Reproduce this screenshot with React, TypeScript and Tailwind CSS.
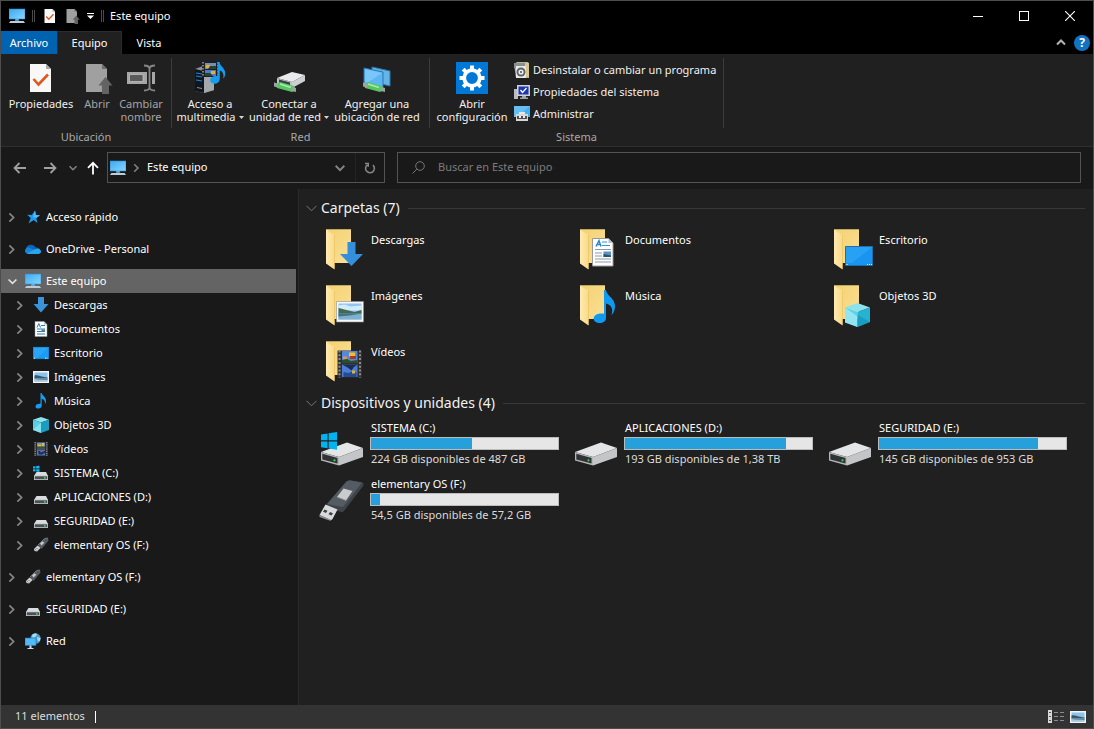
import { useState } from 'react'
import type { ReactNode } from 'react'

type IconProps = { className?: string }

type TreeItem = {
  label: string
  icon: ReactNode
  open?: boolean
  children?: TreeItem[]
}

type Drive = {
  name: string
  free: string
  used: number
  icon: ReactNode
}

/* ---------- small icons (16px) ---------- */

function PcIcon({ className = 'size-4' }: IconProps) {
  return (
    <svg viewBox="0 0 16 16" className={className}>
      <defs>
        <linearGradient id="pcScreen" x1="0" y1="0" x2="1" y2="1">
          <stop offset="0" stopColor="#3aa9f0" />
          <stop offset="1" stopColor="#8ad7ff" />
        </linearGradient>
      </defs>
      <path d="M0 1h16v10H0z" fill="url(#pcScreen)" />
      <path d="M0 1h16v10H0z" fill="none" stroke="#2f8fd0" strokeWidth=".6" />
      <path d="M6.5 11h3l.8 1.8H5.7z" fill="#5fb4e8" />
      <path d="M1.5 13h13l1.5 2H0z" fill="#d5dde3" />
      <path d="M1.2 14h13.6" stroke="#7d99ab" strokeWidth=".5" />
    </svg>
  )
}

function StarIcon() {
  return (
    <svg viewBox="0 0 16 16" className="size-4">
      <path d="M10 1.500l.9 4.500 4.100.3-3.700 2.600 1.100 5.100-3.700-3-5.200 3.500 2.200-5.500L2.200 5.800l4.600.1z" fill="#1c9df0" />
      <path d="M10 1.500l.9 4.500 4.100.3-3.700 2.600L8 8z" fill="#54bbf8" />
    </svg>
  )
}

function CloudIcon() {
  return (
    <svg viewBox="0 0 16 16" className="size-4">
      <path d="M1 9.500A4.800 4.800 0 0 1 6 3.700a5.200 5.200 0 0 1 4.800 2.800c2-.4 4 .7 4.400 2.700l-5 2z" fill="#0f63b8" />
      <path d="M0 10c0-2 1.500-3.500 3.600-3.500 1 0 1.900.4 4.400 2l5 4.200H3C1.200 12.700 0 11.600 0 10z" fill="#1683dc" />
      <path d="M2 12.600L9.800 8.300c.8-.4 1.600-.6 2.400-.6 2.200 0 3.800 1.200 3.800 2.700 0 1.500-1.200 2.500-2.900 2.500H3.200c-.5 0-.8-.1-1.200-.3z" fill="#28a8ea" />
    </svg>
  )
}

function DownloadIcon() {
  return (
    <svg viewBox="0 0 16 16" className="size-4">
      <path d="M5 0h6v7h4.500L8 15.500.5 7H5z" fill="#3b93dc" />
    </svg>
  )
}

function DocIcon() {
  return (
    <svg viewBox="0 0 16 16" className="size-4">
      <path d="M2 .5h9l3 3v12H2z" fill="#fff" stroke="#9a9a9a" strokeWidth=".5" />
      <path d="M11 .5v3h3z" fill="#b8c4cc" />
      <path d="M4 6.500L5.800 2.500 7.500 6.500M8 4.500h4M4 8h8M4 10.500h8M4 13h8" stroke="#2a7fa8" fill="none" />
      <path d="M8.500 8.500H12v2.500H8.500z" fill="#4f7f9a" />
    </svg>
  )
}

function DesktopIcon() {
  return (
    <svg viewBox="0 0 16 16" className="size-4">
      <path d="M0 2h16v12H0z" fill="#1a9cf5" />
      <path d="M0 2h16L4 13H0z" fill="#37acfa" opacity=".5" />
      <path d="M.3 2.300h15.400v11.400H.3z" fill="none" stroke="#1273b8" strokeWidth=".6" />
      <path d="M1 13.200h1M12 13.200h3" stroke="#fff" strokeDasharray="1 .5" strokeWidth=".9" />
    </svg>
  )
}

function PictureIcon({ className = 'size-4' }: IconProps) {
  return (
    <svg viewBox="0 0 16 16" className={className}>
      <path d="M0 2h16v12H0z" fill="#f4f4f4" />
      <path d="M1.500 3.500h13v9h-13z" fill="#8cc3ea" />
      <path d="M1.500 6.500c3-1 5 1 13 2v1.500h-13z" fill="#35586b" />
      <path d="M1.500 9.500h13v3h-13z" fill="#a9c6d8" />
      <path d="M1.500 10.500l8-1 5 .5v1z" fill="#5e88a0" />
    </svg>
  )
}

function MusicIcon() {
  return (
    <svg viewBox="0 0 16 16" className="size-4">
      <path d="M7.500 0h1.200c.3 2.600 4.800 4 4.300 8.600-.2 1.400-.9 2.400-1.200 2.700.8-3-.6-4.800-3.100-5.600v6.900c0 1.700-1.300 3-3.200 3S2.500 14.700 2.500 13.400c0-1.700 1.900-3 5-2.700z" fill="#169cf0" />
    </svg>
  )
}

function CubeIcon() {
  return (
    <svg viewBox="0 0 16 16" className="size-4">
      <path d="M8 0l8 2.800L8 5.500 0 2.800z" fill="#8fe3ef" />
      <path d="M0 2.800l8 2.700V16l-8-3z" fill="#55cfe3" />
      <path d="M16 2.800L8 5.500V16l8-3z" fill="#1a9dbf" />
      <path d="M0 13l8-7.500V16z" fill="#a5ecf5" opacity=".6" />
    </svg>
  )
}

function VideoIcon() {
  return (
    <svg viewBox="0 0 16 16" className="size-4">
      <path d="M1 1h14v14H1z" fill="#2b2b2b" />
      <path d="M2.200 1v14M13.800 1v14" stroke="#9b9b9b" strokeDasharray="1.200 1" strokeWidth="1.200" />
      <path d="M4 1.500h8v6H4z" fill="#6a8fc4" />
      <path d="M4 8.500h8v6H4z" fill="#4573bd" />
      <path d="M5 3.500h3v2H5zM9 2h2v3H9z" fill="#e8b53a" />
      <path d="M4 5.500h8v2H4z" fill="#35552d" />
      <path d="M5 10h2l1 2 2-2h2v1.500l-3 2H6z" fill="#1f2a52" />
      <path d="M9 9h2v1.500H9z" fill="#c6503a" />
    </svg>
  )
}

function SmallDriveIcon({ windows = false }: { windows?: boolean }) {
  return (
    <svg viewBox="0 0 16 16" className="size-4">
      <path d="M3.500 7h9.500l2 4H1z" fill="#d9dcdf" />
      <path d="M1 10.500h14V15H1z" fill="#c4c8cb" />
      <path d="M1.800 11.300h12.400v2.900H1.800z" fill="#4b5054" />
      <path d="M11 12.200h1.800v1.200H11z" fill="#4ee06a" />
      {windows && (
        <path d="M0 1.500l2.500-.3v2.300H0zM3.200 1.100L6.500.7v2.800H3.200zM0 4.200h2.500v2.300L0 6.200zM3.200 4.200h3.300V7l-3.300-.4z" fill="#16b4f0" />
      )}
    </svg>
  )
}

function SmallUsbIcon() {
  return (
    <svg viewBox="0 0 16 16" className="size-4">
      <path d="M5 8l6.500-6.500 3.500-.5.5 2.500L9 11.500l-3-.500z" fill="#565b60" />
      <path d="M5 8l6.500-6.500 3.500-.500" fill="none" stroke="#858a8f" strokeWidth=".7" />
      <path d="M7 6.500l2.500-2.200 1.800 1.500L8.500 8.500z" fill="#c7c9cb" />
      <path d="M1 12l3.500-3.500 3 2.500L4 14.500l-2.500-.5z" fill="#cfd2d4" />
      <path d="M2.500 12.500l.8.800M3.800 11.300l.8.800" stroke="#4f5458" />
    </svg>
  )
}

function NetworkIcon() {
  return (
    <svg viewBox="0 0 16 16" className="size-4">
      <circle cx="10.500" cy="5.500" r="5.200" fill="#4f9fc9" />
      <path d="M7 2c2-1.700 4-1.700 5-1l-1.500 3-3 1zM12 4l3.500 1-1 3.500-2-1z" fill="#a6dcf0" />
      <path d="M0 5h11v7.500H0z" fill="#53b8f8" stroke="#1b75ad" strokeWidth=".6" />
      <path d="M4.500 12.500h2V15h-2zM2.500 15h6v1h-6z" fill="#cfe0ea" />
    </svg>
  )
}

function CheckDocIcon({ className }: IconProps) {
  return (
    <svg viewBox="0 0 32 32" className={className}>
      <path d="M5 2h16l5 5v23H5z" fill="#f8f8f8" />
      <path d="M21 2v5h5z" fill="#a9a9a9" />
      <path d="M8.500 17l5 5.500L23 12.500" fill="none" stroke="#dc5a1f" strokeWidth="2.600" />
    </svg>
  )
}

function OpenDocIcon({ className }: IconProps) {
  return (
    <svg viewBox="0 0 32 32" className={className}>
      <path d="M5 2h16l5 5v23H5z" fill="#a0a0a0" />
      <path d="M21 2v5h5z" fill="#6d6d6d" />
      <path d="M24.500 15l7 8.500H28V32h-7v-8.500h-3.500z" fill="#636363" />
    </svg>
  )
}

/* ---------- ribbon icons (32px) ---------- */

function RenameIcon() {
  return (
    <svg viewBox="0 0 32 32" className="size-8">
      <path d="M2 10h28v12H2z" fill="#a6a6a6" />
      <path d="M4.500 12.500h13.500v7H4.500z" fill="#5a5a5a" stroke="#c9c9c9" strokeWidth=".7" />
      <path d="M22 9h5v14h-5z" fill="#202020" />
      <path d="M19 3.500c3 0 5.500.5 5.500 3.500v18c0 3-2.500 3.500-5.500 3.500M30 3.500c-3 0-5.500.5-5.500 3.500v18c0 3 2.500 3.500 5.500 3.500" fill="none" stroke="#858585" strokeWidth="1.800" />
    </svg>
  )
}

function MediaIcon() {
  return (
    <svg viewBox="0 0 32 32" className="size-8">
      <path d="M1 7l8-3 11 4v20l-10 3-9-2z" fill="#8d9297" />
      <path d="M1 7l9 2v22l-9-2z" fill="#10161d" />
      <path d="M2 11l6 1M2 14l6 1M2 18l6 1" stroke="#2384dc" strokeWidth="1.200" />
      <path d="M3 25.500l5 1" stroke="#8d9297" />
      <path d="M10 9l10-1v20l-10 3z" fill="#a3a8ac" />
      <path d="M8 0h17v15H8z" fill="#1c2026" />
      <path d="M9 0v15M24 0v15" stroke="#dadada" strokeDasharray="1.500 1.500" />
      <path d="M11 1h11v6H11z" fill="#7290b8" />
      <path d="M11 8h11v6H11z" fill="#4d7cc8" />
      <path d="M12 3h4v3h-4zM17 9h4v3h-4z" fill="#dbb13d" />
      <path d="M16 4h6v3h-8zM11 11h5l3 3h-8z" fill="#28422f" />
      <path d="M23.500 0h2c.3 4.500 6.500 6 5.700 12.500-.3 2-1.200 3.500-2 4.300.8-4.300-.2-7.300-3.400-8.300v8.200c0 3-2.600 5-5.300 5-2.500 0-4.300-1.500-4.300-3.500 0-2.800 3.300-4.700 7.300-4.200z" fill="#169bed" />
    </svg>
  )
}

function NetDriveIcon() {
  return (
    <svg viewBox="0 0 32 32" className="size-8">
      <path d="M4 16l15-6 13 3-13 7z" fill="#e9ebec" />
      <path d="M4 16l15 4v6L4 22z" fill="#bfc3c6" />
      <path d="M6 17.500l11 3v3.500L6 21z" fill="#3a3f43" />
      <path d="M32 13l-13 7v6l13-7z" fill="#cdd0d2" />
      <path d="M3 22l4-2 14 4 2 4-4 2-15-4z" fill="#58c464" />
      <path d="M7 22l11 3.500" stroke="#a6eda8" strokeWidth="1.600" />
      <path d="M1 20.500l4 1v4l-4-1zM19 25l4 1v4l-4-1z" fill="#9ba5a3" />
    </svg>
  )
}

function NetPlaceIcon() {
  return (
    <svg viewBox="0 0 32 32" className="size-8">
      <path d="M11 5l18 4v15l-18-4z" fill="#64b4e8" stroke="#2a76ac" />
      <path d="M3 6l19 4v17L3 22z" fill="#5cb6f5" stroke="#2a76ac" />
      <path d="M4 7l17 4-15 10-2-1z" fill="#8ed0fb" opacity=".6" />
      <path d="M3 22l4-2 14 4 2 4-4 2-15-4z" fill="#58c464" />
      <path d="M7 22l11 3.500" stroke="#a6eda8" strokeWidth="1.600" />
      <path d="M2 20.500l4 1v4l-4-1zM20 25l4 1v4l-4-1z" fill="#9ba5a3" />
    </svg>
  )
}

function SettingsIcon() {
  return (
    <svg viewBox="0 0 32 32" className="size-8">
      <path d="M0 0h32v32H0z" fill="#0078d7" />
      <g fill="#fff">
        <path d="M14 3.500h4V8h-4zM14 24h4v4.500h-4zM3.500 14H8v4H3.500zM24 14h4.500v4H24z" />
        <path d="M14 3.500h4V8h-4zM14 24h4v4.500h-4zM3.500 14H8v4H3.500zM24 14h4.500v4H24z" transform="rotate(45 16 16)" />
      </g>
      <circle cx="16" cy="16" r="7.800" fill="none" stroke="#fff" strokeWidth="3.800" />
    </svg>
  )
}

function UninstallIcon() {
  return (
    <svg viewBox="0 0 16 16" className="size-4">
      <path d="M0 2l3-2h11l1 2v14H2z" fill="#b9b29e" />
      <path d="M0 1h12v5H0z" fill="#88918d" />
      <path d="M11 1h4v14h-4z" fill="#d9c68f" />
      <path d="M2 4h10v12H2z" fill="#e8e8e8" />
      <circle cx="7" cy="10" r="4.500" fill="#5c6266" />
      <circle cx="7" cy="10" r="2.600" fill="#eceeef" />
      <circle cx="7" cy="10" r="1" fill="#4b5054" />
    </svg>
  )
}

function SystemIcon() {
  return (
    <svg viewBox="0 0 16 16" className="size-4">
      <path d="M0 5h4v10H0z" fill="#b9bdc1" />
      <path d="M3 1h13v11H3z" fill="#cfd3d8" />
      <path d="M4.500 2.500h10v8h-10z" fill="#1c36b0" />
      <path d="M6.500 6l2 2.500L12.500 4" fill="none" stroke="#fff" strokeWidth="1.300" />
      <path d="M8 12h4v1.500h2V15H6v-1.500h2z" fill="#9ea3a8" />
    </svg>
  )
}

function ManageIcon() {
  return (
    <svg viewBox="0 0 16 16" className="size-4">
      <path d="M0 0h16v11H0z" fill="#43b0f0" />
      <path d="M0 0h16L3 11H0z" fill="#7bcbf7" opacity=".6" />
      <path d="M5 6h6v2H5z" fill="#e6e6e6" />
      <path d="M2 8h12v7H2z" fill="#d6d6d2" />
      <path d="M3 10h10v3H3z" fill="#4c4f50" />
      <path d="M5 10h2v2H5zM9 10h2v2H9z" fill="#eee" />
    </svg>
  )
}

/* ---------- large content icons (48px) ---------- */

function FolderIcon({ children }: { children: ReactNode }) {
  return (
    <svg viewBox="0 0 48 48" className="size-12 shrink-0">
      <defs>
        <linearGradient id="folderBack" x1="0" y1="0" x2="1" y2="1">
          <stop offset="0" stopColor="#f3d272" />
          <stop offset="1" stopColor="#fbdf94" />
        </linearGradient>
        <linearGradient id="folderFront" x1="0" y1="0" x2="1" y2="0">
          <stop offset="0" stopColor="#ffeab0" />
          <stop offset="1" stopColor="#f9da86" />
        </linearGradient>
      </defs>
      <path d="M7 3.200h25V37H11z" fill="url(#folderBack)" />
      <path d="M7 3.500L15.500 9v34.500L7 37.500z" fill="url(#folderFront)" />
      <path d="M15.500 9v34" stroke="#e9bf5c" strokeWidth=".6" />
      {children}
    </svg>
  )
}

const downloadBadge = <path d="M28.500 16h8v12H44L32.500 40 21 28h7.500z" fill="#3490dc" />

const documentBadge = (
  <g>
    <path d="M19.500 12.500h16l4.500 4.500v23H19.500z" fill="#fff" stroke="#9a9a9a" />
    <path d="M35.500 12.500V17H40z" fill="#b5bfc6" />
    <path d="M23 20.500l3-6 2 6M24 18.500h3.500" fill="none" stroke="#2186c8" strokeWidth="1.400" />
    <path d="M29 16h5M29 19.500h8" stroke="#2b9ad6" strokeWidth="1.200" />
    <path d="M22 23.500h16M22 27h7M22 30h7M22 33h16M22 36h16" stroke="#8b9aa5" />
    <path d="M30.500 25.500h7.500v5.500h-7.500z" fill="#5a93c4" />
    <path d="M30.500 28l7.500 1.500V31h-7.500z" fill="#29556e" />
  </g>
)

const desktopBadge = (
  <g>
    <path d="M18.500 20.500h27v19h-27z" fill="#1795f0" stroke="#1f6ea5" />
    <path d="M19 21h26L25 37h-6z" fill="#3fb0fb" opacity=".45" />
    <path d="M19.500 38.500h2M40 38.500h5" stroke="#fff" strokeDasharray="1 1" />
  </g>
)

const pictureBadge = (
  <g>
    <path d="M17.500 19.500h27v20.500h-27z" fill="#f7f7f7" stroke="#8b8f92" strokeWidth=".6" />
    <path d="M19.500 21.500h23v16h-23z" fill="#8fc5f2" />
    <path d="M19.500 23.500l6-1 6 2 11-1v5h-23z" fill="#d6ebf8" />
    <path d="M19.500 26c4 .5 9 2.500 16 4l7-2v4h-23z" fill="#3e6c50" />
    <path d="M19.500 31.500h23v6h-23z" fill="#7fb0cc" />
    <path d="M19.500 31.500h23l-12 2-11 1z" fill="#467088" />
  </g>
)

const musicBadge = (
  <path d="M31 8h2c.5 6 9.500 8 9 17-.2 4-2 6.500-3.500 8 2-6 0-10-5.500-11.500v14.500c0 3.300-2.800 5-6.200 5-3.600 0-6.100-1.800-6.100-4.300 0-3.700 4.300-6 10.300-5z" fill="#0f9af0" />
)

const cubeBadge = (
  <g>
    <path d="M30.500 21L43 25.500 30.500 30l-12.500-4.500z" fill="#8be3f0" />
    <path d="M18 25.500L30.500 30v15L18 40.500z" fill="#5dd3e6" />
    <path d="M43 25.500L30.500 30v15L43 40z" fill="#26b3d2" />
    <path d="M18 25.500l12.500 9V45L18 40.500z" fill="#b8f3f8" opacity=".6" />
    <path d="M43 40l-12.500-7v12z" fill="#0d8fb4" opacity=".6" />
  </g>
)

const videoBadge = (
  <g>
    <path d="M18.500 12.500H43v27H18.500z" fill="#303030" />
    <path d="M20.500 12.500v27M41 12.500v27" stroke="#8d8d8d" strokeWidth="2" strokeDasharray="2 1.800" />
    <path d="M23 13h15.500v12H23z" fill="#5587dc" />
    <path d="M23 26.500h15.500v12.500H23z" fill="#4a7dd8" />
    <path d="M30 14.500h6v4h-6z" fill="#e9c133" />
    <path d="M31 18h6v3h-6z" fill="#b6341f" />
    <path d="M24 18.500h4v3h-4z" fill="#d8975a" />
    <path d="M23 22l5-1 4 2 6.500-1v3H23z" fill="#27502a" />
    <path d="M23 26.500h15.500l-4 3-2 3-4-3z" fill="#1e2c50" />
    <path d="M24.500 34l5 1 5-2 3 2v4h-13z" fill="#274b92" />
    <path d="M33 32.500h3v3h-3z" fill="#e0b434" />
  </g>
)

function DriveIcon({ windows = false }: { windows?: boolean }) {
  return (
    <svg viewBox="0 0 48 48" className="size-12 shrink-0">
      <path d="M2 32L28 22.500 44 28 20 37z" fill="#e4e5e7" />
      <path d="M2 32l18 5v8.500L2 40.500z" fill="#b4b6b8" />
      <path d="M3.300 33.700l15.200 4.200v5.700L3.300 39.400z" fill="#2f3335" />
      <path d="M44 28L20 37v8.500L44 37z" fill="#c3c5c8" />
      <circle cx="15.500" cy="40.300" r="1.100" fill="#3dd75a" />
      {windows && (
        <path d="M2 14.500l6.500-1v6.800H2zM9.600 13.300L18 12v8.300H9.600zM2 21.400h6.500v6.800L2 27.300zM9.600 21.400H18v8.300l-8.400-1.200z" fill="#00b4f0" />
      )}
    </svg>
  )
}

function UsbIcon() {
  return (
    <svg viewBox="0 0 48 48" className="size-12 shrink-0">
      <path d="M8 28L27 6c1-1.200 3-1.700 5-1.400l11 1.900c1.500.4 2 2 1.100 3.500L25 35c-.8 1-2 1.400-3 1L9 32z" fill="#3e444a" />
      <path d="M8 28L27 6c1-1.200 3-1.700 5-1.400l11 1.900L24 31z" fill="#545b62" />
      <path d="M18 21l6.500-8.500 9 2.500-6.500 9.500z" fill="#c9cbcc" />
      <path d="M18 21l9 3.500" stroke="#8f9396" />
      <path d="M6.500 28.500l12 5-5 9.500c-.4.800-1.300 1.200-2 1L.5 39z" fill="#d8d9da" />
      <path d="M.5 39l11 4.500.5 1.500L.5 41z" fill="#8c9092" />
      <path d="M5.500 33.500l3 1.200L7 37l-3-1.200zM11 36l3 1.200-1.500 2.300-3-1.200z" fill="#3c4043" />
    </svg>
  )
}

/* ---------- pieces ---------- */

function Chevron({ down = false, className = 'size-2' }: { down?: boolean; className?: string }) {
  return (
    <svg viewBox="0 0 8 8" className={className} fill="none" stroke="currentColor" strokeWidth="1.500">
      {down ? <path d="M.5 2.200L4 5.700l3.500-3.500" /> : <path d="M1.200.3L5 4 1.200 7.700" />}
    </svg>
  )
}

function Caret() {
  return (
    <svg viewBox="0 0 5 3" className="mb-0.5 ml-[3px] inline-block h-[3px] w-[5px] align-middle">
      <path d="M0 0h5L2.500 3z" fill="#d5d5d5" />
    </svg>
  )
}

type RibbonButtonProps = {
  icon: ReactNode
  lines: string[]
  width: string
  disabled?: boolean
  menu?: boolean
}

function RibbonButton({ icon, lines, width, disabled, menu }: RibbonButtonProps) {
  return (
    <button
      type="button"
      disabled={disabled}
      className={`flex flex-col items-center gap-[3px] pt-2 text-[11px] leading-[13px] whitespace-nowrap ${width} ${disabled ? 'text-[#a5a5a5]' : 'text-[#f0f0f0]'}`}
    >
      {icon}
      <span className="text-center">
        {lines.map((line, i) => (
          <span key={line} className="block">
            {line}
            {menu && i === lines.length - 1 && <Caret />}
          </span>
        ))}
      </span>
    </button>
  )
}

function RibbonGroup({ label, children }: { label: string; children: ReactNode }) {
  return (
    <>
      <section aria-label={label} className="flex flex-col">
        <div className="flex h-[74px]">{children}</div>
        <div className="text-center text-[11px] leading-[18px] text-[#a8a8a8]">{label}</div>
      </section>
      <div className="mt-1 h-[70px] w-px bg-[#3c3c3c]" />
    </>
  )
}

function TreeRow({ item, nested = false }: { item: TreeItem; nested?: boolean }) {
  const [open, setOpen] = useState(!!item.open)
  return (
    <li>
      <div className={`mr-0.5 flex h-6 items-center ${nested ? 'pl-[15px]' : 'pl-[7px]'} ${item.children ? 'bg-[#646464]' : ''}`}>
        <button
          type="button"
          aria-label={`Expandir ${item.label}`}
          onClick={() => setOpen(!open)}
          className={`flex h-6 w-[17px] items-center ${open ? 'text-[#e0e0e0]' : 'text-[#868686]'}`}
        >
          <Chevron down={open} className="size-[9px]" />
        </button>
        {item.icon}
        <a href="#" className="ml-[5px] whitespace-nowrap">{item.label}</a>
      </div>
      {open && item.children && (
        <ul>
          {item.children.map(child => (
            <TreeRow key={child.label} item={child} nested />
          ))}
        </ul>
      )}
    </li>
  )
}

function SectionHeading({ title }: { title: string }) {
  return (
    <h2 className="flex h-5 items-center text-sm text-[#f2f2f2]">
      <button type="button" aria-label={`Contraer ${title}`} className="mr-1 text-[#777]">
        <svg viewBox="0 0 11 7" className="h-[7px] w-[11px]" fill="none" stroke="currentColor">
          <path d="M.5.800l5 5 5-5" />
        </svg>
      </button>
      <span className="whitespace-nowrap">{title}</span>
      <span className="ml-2 h-px flex-1 bg-[#383838]" />
    </h2>
  )
}

function DriveTile({ drive }: { drive: Drive }) {
  return (
    <li className="flex h-14 gap-[3px] pt-[3px]">
      {drive.icon}
      <div className="w-[189px]">
        <div className="pl-px leading-4">{drive.name}</div>
        <div
          role="meter"
          aria-label={drive.name}
          aria-valuenow={drive.used}
          aria-valuemin={0}
          aria-valuemax={100}
          className="mt-px h-[13px] border border-[#bcbcbc] bg-[#e6e6e6]"
        >
          <div className="h-full bg-[#26a0da]" style={{ width: `${drive.used}%` }} />
        </div>
        <div className="pl-px leading-[18px] whitespace-nowrap text-[#dcdcdc]">{drive.free}</div>
      </div>
    </li>
  )
}

/* ---------- data ---------- */

const tree: TreeItem[] = [
  { label: 'Acceso rápido', icon: <StarIcon /> },
  { label: 'OneDrive - Personal', icon: <CloudIcon /> },
  {
    label: 'Este equipo',
    icon: <PcIcon />,
    open: true,
    children: [
      { label: 'Descargas', icon: <DownloadIcon /> },
      { label: 'Documentos', icon: <DocIcon /> },
      { label: 'Escritorio', icon: <DesktopIcon /> },
      { label: 'Imágenes', icon: <PictureIcon /> },
      { label: 'Música', icon: <MusicIcon /> },
      { label: 'Objetos 3D', icon: <CubeIcon /> },
      { label: 'Vídeos', icon: <VideoIcon /> },
      { label: 'SISTEMA (C:)', icon: <SmallDriveIcon windows /> },
      { label: 'APLICACIONES (D:)', icon: <SmallDriveIcon /> },
      { label: 'SEGURIDAD (E:)', icon: <SmallDriveIcon /> },
      { label: 'elementary OS (F:)', icon: <SmallUsbIcon /> },
    ],
  },
  { label: 'elementary OS (F:)', icon: <SmallUsbIcon /> },
  { label: 'SEGURIDAD (E:)', icon: <SmallDriveIcon /> },
  { label: 'Red', icon: <NetworkIcon /> },
]

const folders = [
  { name: 'Descargas', badge: downloadBadge },
  { name: 'Documentos', badge: documentBadge },
  { name: 'Escritorio', badge: desktopBadge },
  { name: 'Imágenes', badge: pictureBadge },
  { name: 'Música', badge: musicBadge },
  { name: 'Objetos 3D', badge: cubeBadge },
  { name: 'Vídeos', badge: videoBadge },
]

const drives: Drive[] = [
  { name: 'SISTEMA (C:)', free: '224 GB disponibles de 487 GB', used: 54, icon: <DriveIcon windows /> },
  { name: 'APLICACIONES (D:)', free: '193 GB disponibles de 1,38 TB', used: 86, icon: <DriveIcon /> },
  { name: 'SEGURIDAD (E:)', free: '145 GB disponibles de 953 GB', used: 85, icon: <DriveIcon /> },
  { name: 'elementary OS (F:)', free: '54,5 GB disponibles de 57,2 GB', used: 5, icon: <UsbIcon /> },
]

const systemLinks = [
  { label: 'Desinstalar o cambiar un programa', icon: <UninstallIcon /> },
  { label: 'Propiedades del sistema', icon: <SystemIcon /> },
  { label: 'Administrar', icon: <ManageIcon /> },
]

/* ---------- window ---------- */

function TitleBar() {
  return (
    <header className="flex h-[30px] items-center bg-black pl-2">
      <PcIcon />
      <span className="ml-[7px] h-3 w-[3px] border-x border-[#4a4a4a]" />
      <button type="button" aria-label="Propiedades" className="ml-[7px]">
        <CheckDocIcon className="size-4" />
      </button>
      <button type="button" aria-label="Abrir" className="ml-1.5">
        <OpenDocIcon className="size-4" />
      </button>
      <button type="button" aria-label="Personalizar barra" className="ml-[7px]">
        <svg viewBox="0 0 7 6" className="h-1.5 w-[7px]">
          <path d="M0 0h7v1H0zM0 2.500h7L3.500 6z" fill="#fff" />
        </svg>
      </button>
      <span className="ml-[7px] h-3 w-[3px] border-x border-[#4a4a4a]" />
      <h1 className="ml-1.5 text-[11px]">Este equipo</h1>
      <div className="ml-auto flex">
        <button type="button" aria-label="Minimizar" className="flex h-[30px] w-[46px] items-center justify-center">
          <span className="h-px w-2.5 bg-white" />
        </button>
        <button type="button" aria-label="Maximizar" className="flex h-[30px] w-[46px] items-center justify-center">
          <span className="size-2.5 border border-white" />
        </button>
        <button type="button" aria-label="Cerrar" className="flex h-[30px] w-[46px] items-center justify-center">
          <svg viewBox="0 0 10 10" className="size-2.5" stroke="#fff" strokeWidth="1.100">
            <path d="M0 0l10 10M10 0L0 10" />
          </svg>
        </button>
      </div>
    </header>
  )
}

function Tabs() {
  return (
    <div className="flex h-[23px] bg-black">
      <button type="button" className="w-14 bg-[#0063b1] pt-px">Archivo</button>
      <button type="button" className="w-[65px] border-x border-t border-[#2b2b2b] bg-[#202020]">Equipo</button>
      <button type="button" className="w-[54px] pt-px">Vista</button>
      <div className="ml-auto flex items-center gap-2 pr-[3px]">
        <button type="button" aria-label="Minimizar la cinta" className="text-[#b4b4b4]">
          <svg viewBox="0 0 10 7" className="h-[7px] w-2.5" fill="none" stroke="currentColor" strokeWidth="2">
            <path d="M1 5.500l4-4 4 4" />
          </svg>
        </button>
        <button type="button" aria-label="Ayuda" className="flex size-4 items-center justify-center rounded-full bg-[#1273c4] text-xs font-bold">
          ?
        </button>
      </div>
    </div>
  )
}

function Ribbon() {
  return (
    <div className="flex h-[93px] border-b border-[#2e2e2e] bg-[#202020]">
      <RibbonGroup label="Ubicación">
        <div className="flex pr-1.5 pl-1">
          <RibbonButton width="w-[72px]" icon={<CheckDocIcon className="size-8" />} lines={['Propiedades']} />
          <RibbonButton width="w-10" icon={<OpenDocIcon className="size-8" />} lines={['Abrir']} disabled />
          <RibbonButton width="w-12" icon={<RenameIcon />} lines={['Cambiar', 'nombre']} disabled />
        </div>
      </RibbonGroup>
      <RibbonGroup label="Red">
        <div className="flex pr-1.5 pl-px">
          <RibbonButton width="w-[74px]" icon={<MediaIcon />} lines={['Acceso a', 'multimedia']} menu />
          <RibbonButton width="w-[84px]" icon={<NetDriveIcon />} lines={['Conectar a', 'unidad de red']} menu />
          <RibbonButton width="w-[92px]" icon={<NetPlaceIcon />} lines={['Agregar una', 'ubicación de red']} />
        </div>
      </RibbonGroup>
      <RibbonGroup label="Sistema">
        <RibbonButton width="w-[84px]" icon={<SettingsIcon />} lines={['Abrir', 'configuración']} />
        <ul className="flex w-[209px] flex-col pt-[5px]">
          {systemLinks.map(link => (
            <li key={link.label}>
              <button type="button" className="flex h-[22px] items-center gap-[3px] whitespace-nowrap text-[#f0f0f0]">
                {link.icon}
                {link.label}
              </button>
            </li>
          ))}
        </ul>
      </RibbonGroup>
    </div>
  )
}

function AddressBar() {
  return (
    <div className="flex h-[42px] items-center bg-[#191919] px-3 pb-px">
      <button type="button" aria-label="Atrás" className="text-[#a0a0a0]">
        <svg viewBox="0 0 14 12" className="h-3 w-3.5" fill="none" stroke="currentColor" strokeWidth="1.800">
          <path d="M13 6H1.500M6.500 1l-5 5 5 5" />
        </svg>
      </button>
      <button type="button" aria-label="Adelante" className="ml-4 text-[#a0a0a0]">
        <svg viewBox="0 0 14 12" className="h-3 w-3.5" fill="none" stroke="currentColor" strokeWidth="1.800">
          <path d="M1 6h11.500M7.500 1l5 5-5 5" />
        </svg>
      </button>
      <button type="button" aria-label="Ubicaciones recientes" className="ml-3 text-[#858585]">
        <Chevron down />
      </button>
      <button type="button" aria-label="Subir" className="ml-2.5 text-white">
        <svg viewBox="0 0 12 14" className="h-3.5 w-3" fill="none" stroke="currentColor" strokeWidth="1.800">
          <path d="M6 13.500V2M1 6.800l5-5 5 5" />
        </svg>
      </button>
      <nav aria-label="Ruta" className="ml-2 flex h-[31px] w-[278px] items-center border border-[#535353] pl-0.5">
        <PcIcon />
        <span className="ml-[7px] text-[#858585]">
          <Chevron />
        </span>
        <a href="#" className="ml-1.5">Este equipo</a>
        <button type="button" aria-label="Ubicaciones anteriores" className="ml-auto text-[#858585]">
          <Chevron down className="size-2.5" />
        </button>
        <button type="button" aria-label="Actualizar" className="ml-2.5 flex h-full w-[29px] items-center justify-center border-l border-[#242424] text-[#858585]">
          <svg viewBox="0 0 12 12" className="size-3" fill="none" stroke="currentColor" strokeWidth="1.600">
            <path d="M9 3.200A4.400 4.400 0 1 1 3.200 3M1 1.500h3.200v3.300" />
          </svg>
        </button>
      </nav>
      <label className="ml-3 flex h-[31px] flex-1 items-center border border-[#535353] pl-3.5">
        <svg viewBox="0 0 13 13" className="size-[13px]" fill="none" stroke="#777">
          <circle cx="8" cy="5" r="4.300" />
          <path d="M4.800 8.200L.5 12.500" />
        </svg>
        <input
          type="text"
          aria-label="Buscar"
          placeholder="Buscar en Este equipo"
          className="ml-[13px] min-w-0 flex-1 bg-transparent outline-none placeholder:text-[#7c7c7c]"
        />
      </label>
    </div>
  )
}

function StatusBar() {
  return (
    <footer className="flex h-[23px] items-center bg-[#333] pr-[7px] pl-3.5 text-[#dcdcdc]">
      <span>11 elementos</span>
      <span className="ml-2.5 h-3 w-px bg-white" />
      <button type="button" aria-label="Detalles" className="ml-auto">
        <svg viewBox="0 0 16 13" className="h-[13px] w-4">
          <path d="M0 0h4v13H0z" fill="#d8d8d8" />
          <path d="M1 2.500h2M1 6.500h2M1 10.500h2" stroke="#555" />
          <path d="M6 2.500h10M6 6.500h10M6 10.500h10" stroke="#8c8c8c" strokeDasharray="4 2" />
        </svg>
      </button>
      <button type="button" aria-label="Iconos grandes" className="ml-1.5">
        <PictureIcon />
      </button>
    </footer>
  )
}

export default function App() {
  return (
    <div className="flex min-h-screen flex-col border border-[#4d4d4d] bg-[#202020] font-['Noto_Sans',sans-serif] text-[11px] text-white">
      <TitleBar />
      <Tabs />
      <Ribbon />
      <AddressBar />
      <div className="flex flex-1">
        <aside className="w-[298px] shrink-0 border-r border-[#2b2b2b] bg-[#191919] pt-4">
          <ul className="flex flex-col gap-2">
            {tree.map(item => (
              <TreeRow key={item.label} item={item} />
            ))}
          </ul>
        </aside>
        <main className="min-w-0 flex-1 pt-[9px] pr-2 pl-[7px]">
          <SectionHeading title="Carpetas (7)" />
          <ul className="mt-1 ml-[13px] grid grid-cols-[repeat(auto-fill,254px)]">
            {folders.map(folder => (
              <li key={folder.name} className="flex h-14 gap-1 pt-1">
                <FolderIcon>{folder.badge}</FolderIcon>
                <span className="pt-1.5 leading-4">{folder.name}</span>
              </li>
            ))}
          </ul>
          <div className="mt-[3px]">
            <SectionHeading title="Dispositivos y unidades (4)" />
          </div>
          <ul className="mt-1 ml-[13px] grid grid-cols-[repeat(auto-fill,254px)]">
            {drives.map(drive => (
              <DriveTile key={drive.name} drive={drive} />
            ))}
          </ul>
        </main>
      </div>
      <StatusBar />
    </div>
  )
}
